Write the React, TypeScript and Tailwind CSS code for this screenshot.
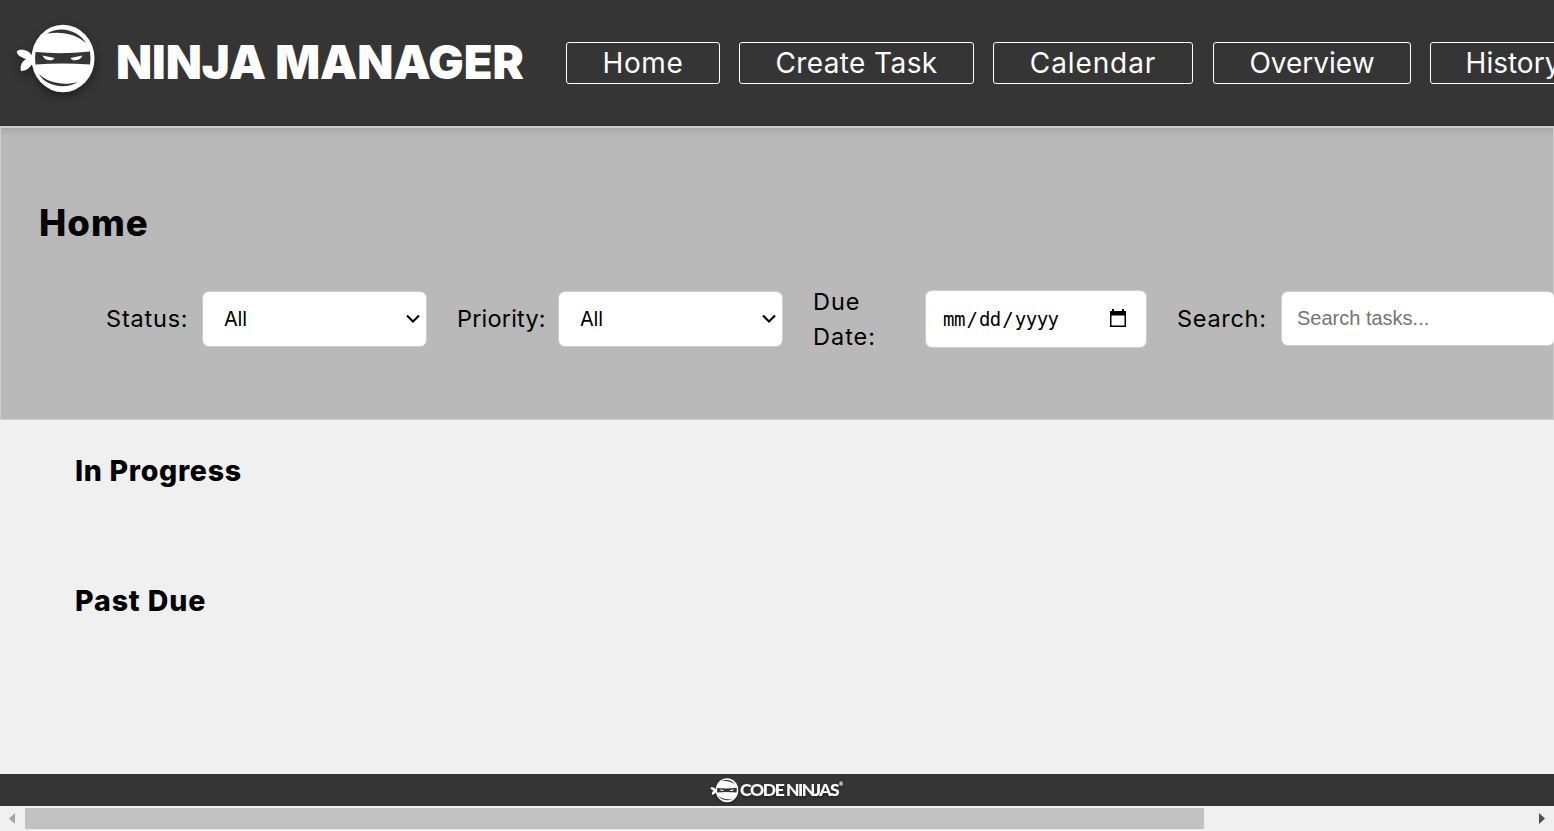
import type { ReactNode } from "react";

const ui = "font-['Inter','Liberation_Sans',sans-serif]";

function NinjaHead({ className }: { className: string }) {
  return (
    <svg viewBox="0 0 80 70" className={className} fill="none">
      <path d="M17 33C14 26 5 24 1 27C0 30 4 33 10 35C5 38 4 43 5 47C11 47 15 43 18 37Z" fill="#fff" />
      <ellipse cx="47" cy="34.5" rx="31.5" ry="33.700" fill="#fff" />
      <path d="M31 9.500C45 1 63 7 70 19C60 10 46 7 31 9.500Z" fill="#353535" />
      <path d="M23 50C32 59 48 62 62 58C49 66 29 62 23 50Z" fill="#353535" />
      <path d="M19.500 28Q46 30.500 74 27.500Q75 34 74 40.500Q46 38.500 19.500 40.500Q18.500 34 19.500 28Z" fill="#353535" />
      <path d="M26.500 31.500L38.500 34C37 37.500 29 37.500 26.500 31.500Z" fill="#fff" />
      <path d="M66.500 31.500L54.500 34C56 37.500 64 37.500 66.500 31.500Z" fill="#fff" />
    </svg>
  );
}

const links = [
  { label: "Home", box: "w-[154px] mr-[19px]", text: "tracking-[0.6px]", size: "text-[28px]" },
  { label: "Create Task", box: "w-[235px] mr-[19px]", text: "tracking-[0.4px]", size: "text-[28px]" },
  { label: "Calendar", box: "w-[200px] mr-[20px]", text: "tracking-[0.9px]", size: "text-[28px]" },
  { label: "Overview", box: "w-[198px] mr-[19px]", text: "tracking-[0px]", size: "text-[28px]" },
  { label: "History", box: "w-[166px]", text: "tracking-[0px]", size: "text-[28px]" },
];

function Label({ className, children }: { className: string; children: ReactNode }) {
  return <span className={`mb-px shrink-0 text-[23.5px] leading-[35px] font-[380] ${className}`}>{children}</span>;
}

function SelectBox({ className }: { className: string }) {
  return (
    <button className={`flex h-14 w-[225px] shrink-0 items-center justify-between rounded-[7px] border border-[#ccc] bg-white pr-[5px] pl-[21px] text-[20px] font-[380] ${className}`}>
      <span className="tracking-[-0.2px]">All</span>
      <svg viewBox="0 0 16 10" className="h-[10px] w-4" fill="none" stroke="#000" strokeWidth="2.1">
        <path d="M2 1.500L8 7.500L14 1.500" />
      </svg>
    </button>
  );
}

export default function App() {
  return (
    <div className={`flex h-[831px] w-full flex-col overflow-hidden bg-[#f0f0f0] text-black ${ui}`}>
      <header className="flex h-[126px] w-full shrink-0 items-center overflow-hidden bg-[#353535] text-white">
        <NinjaHead className="mb-[8px] ml-[16px] h-[70px] w-[80px] shrink-0 drop-shadow-[0_4px_4px_rgba(0,0,0,0.4)]" />
        <h1 className="mb-[3px] ml-5 w-[450px] shrink-0 text-[47px] leading-[56px] font-black tracking-[-0.1px] whitespace-nowrap">NINJA MANAGER</h1>
        <nav className="flex shrink-0">
          {links.map((l) => (
            <a key={l.label} className={`flex h-[42px] shrink-0 items-center justify-center rounded-[3px] border border-white leading-none whitespace-nowrap ${l.size} ${l.box}`}>
              <span className={l.text}>{l.label}</span>
            </a>
          ))}
        </nav>
      </header>

      <section className="h-[294px] shrink-0 border border-t-2 border-[#ccc] bg-[#b9b9b9]">
        <div className="h-2 bg-linear-to-b from-[#a9a9a9] to-[#b9b9b9]" />
        <h2 className="mt-[63px] ml-[38px] text-[36.5px] leading-[48px] font-extrabold tracking-[1px]">Home</h2>
        <div className="mt-[34px] flex h-[76px] items-center pl-[105px]">
          <Label className="w-[96px] tracking-[0.8px]">Status:</Label>
          <SelectBox className="mr-[30px]" />
          <Label className="w-[101px] tracking-[0.2px]">Priority:</Label>
          <SelectBox className="mr-[30px]" />
          <Label className="w-[112px] tracking-[1px]">
            Due
            <br />
            Date:
          </Label>
          <div className="mr-[30px] flex h-[58px] w-[222px] shrink-0 items-center justify-between rounded-[7px] border border-[#ccc] bg-white pr-[19px] pl-[17px]">
            <span className="flex font-['DejaVu_Sans_Mono',monospace] text-[19px] leading-6 tracking-[-0.5px]">
              <span>mm</span>
              <span className="w-[14px] text-center">/</span>
              <span>dd</span>
              <span className="w-[14px] text-center">/</span>
              <span>yyyy</span>
            </span>
            <svg viewBox="0 0 18 19" className="mb-px h-[19px] w-[18px]">
              <path d="M1 2H17V18H1ZM2.500 6.500V16.500H15.500V6.500Z" fill="#000" fillRule="evenodd" />
              <path d="M3 0H5V3H3ZM13 0H15V3H13Z" fill="#000" />
            </svg>
          </div>
          <Label className="w-[104px] tracking-[0.7px]">Search:</Label>
          <input
            placeholder="Search tasks..."
            className="mb-[2px] h-[55px] w-[274px] shrink-0 rounded-[7px] border border-[#ccc] bg-white px-[15px] font-['Liberation_Sans',sans-serif] text-[20px] placeholder:text-[#757575]"
          />
        </div>
      </section>

      <main className="flex-1 pl-[75px]">
        <h3 className="mt-[31px] text-[28.5px] leading-[40px] font-extrabold tracking-[0.7px]">In Progress</h3>
        <h3 className="mt-[90px] text-[28.5px] leading-[40px] font-extrabold tracking-[0.9px]">Past Due</h3>
      </main>

      <footer className="flex h-8 shrink-0 items-center bg-[#353535] pl-[710px] text-white">
        <span className="flex items-center drop-shadow-[0_2px_1px_rgba(0,0,0,0.3)]">
          <NinjaHead className="h-[25px] w-[29px]" />
          <span className="ml-px flex font-['Lato',sans-serif] text-[17.5px] leading-5 font-black whitespace-nowrap">
            <span className="w-[46px] tracking-[-1.3px]">CODE</span>
            <span className="w-[53px] tracking-[-1.6px]">NINJAS</span>
            <sup className="top-[2px] text-[5px] leading-none">®</sup>
          </span>
        </span>
      </footer>

      <div className="flex h-[25px] shrink-0 items-center bg-[#f0f0f0]">
        <svg viewBox="0 0 25 25" className="size-[25px] shrink-0">
          <path d="M15 7V18L9 12.500Z" fill="#a3a3a3" />
        </svg>
        <div className="h-[21px] w-[1179px] shrink-0 bg-[#c1c1c1]" />
        <span className="flex-1" />
        <svg viewBox="0 0 25 25" className="size-[25px] shrink-0">
          <path d="M10 7V18L16 12.500Z" fill="#505050" />
        </svg>
      </div>
    </div>
  );
}
